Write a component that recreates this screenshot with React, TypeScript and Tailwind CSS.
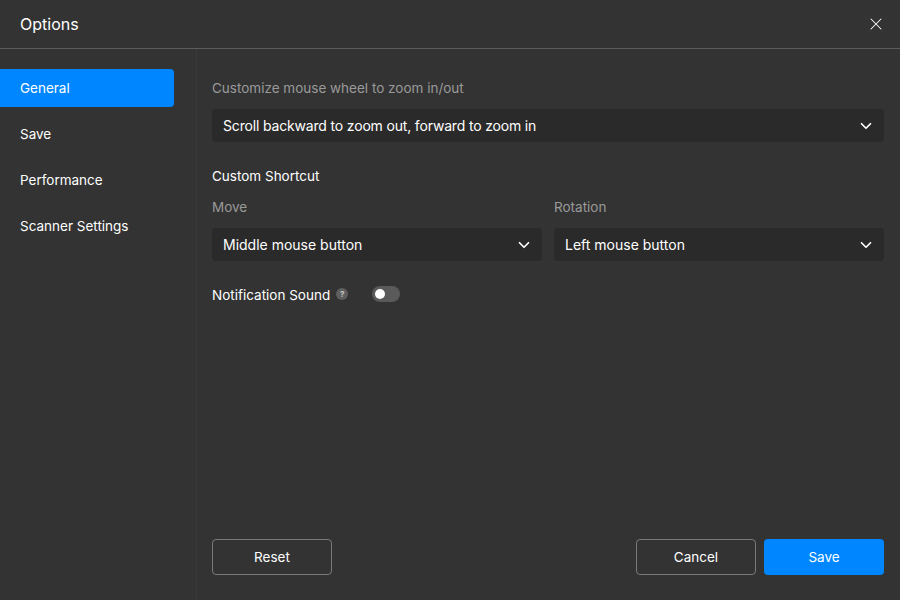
import { ChevronDown, X } from "lucide-react";

const navItems = ["General", "Save", "Performance", "Scanner Settings"];

function Select({ value, tight }: { value: string; tight?: boolean }) {
  return (
    <div className="flex h-[33px] w-full items-center justify-between rounded-[4px] bg-[#2a2a2a] pl-[11px] pr-[9px]">
      <span className={tight ? "text-[14px] leading-[20px] tracking-[-0.17px] text-white" : "text-[14px] leading-[20px] text-white"}>
        {value}
      </span>
      <ChevronDown className="h-[18px] w-[18px] text-white" strokeWidth={2.25} />
    </div>
  );
}

export default function App() {
  return (
    <div
      className="flex h-[600px] w-[900px] flex-col overflow-hidden bg-[#333333] text-white"
      style={{ fontFamily: "Inter, sans-serif" }}
    >
      <div className="flex h-[49px] shrink-0 items-center justify-between border-b border-[#5c5c5c] pl-[20px] pr-[14px]">
        <h1 className="text-[16px] font-normal leading-[22px]">Options</h1>
        <X className="h-[20px] w-[20px] text-white" strokeWidth={1.25} />
      </div>

      <div className="flex min-h-0 flex-1">
        <aside className="flex w-[197px] shrink-0 flex-col gap-[8px] border-r border-[#3a3a3a] pt-[20px]">
          {navItems.map((item, i) => (
            <div
              key={item}
              className={
                i === 0
                  ? "flex h-[38px] w-[174px] items-center rounded-r-[4px] bg-[#0087ff] pl-[20px] text-[13.5px] leading-[20px] text-white"
                  : "flex h-[38px] w-[174px] items-center pl-[20px] text-[13.5px] leading-[20px] text-white"
              }
            >
              {item}
            </div>
          ))}
        </aside>

        <main className="flex min-w-0 flex-1 flex-col pl-[15px] pr-[16px] pt-[29px] pb-[25px]">
          <p className="text-[13.5px] leading-[20px] text-[#9a9a9a]">Customize mouse wheel to zoom in/out</p>
          <div className="mt-[11px]">
            <Select value="Scroll backward to zoom out, forward to zoom in" tight />
          </div>

          <p className="mt-[24px] text-[13.5px] leading-[20px] text-white">Custom Shortcut</p>
          <div className="mt-[11px] grid grid-cols-2 gap-[12px]">
            <div>
              <p className="text-[13.5px] leading-[20px] text-[#9a9a9a]">Move</p>
              <div className="mt-[11px]">
                <Select value="Middle mouse button" />
              </div>
            </div>
            <div>
              <p className="text-[13.5px] leading-[20px] text-[#9a9a9a]">Rotation</p>
              <div className="mt-[11px]">
                <Select value="Left mouse button" />
              </div>
            </div>
          </div>

          <div className="mt-[24px] flex items-center">
            <span className="text-[13.5px] leading-[20px] text-white">Notification Sound</span>
            <span className="mb-[2px] ml-[6px] flex h-[12px] w-[12px] items-center justify-center rounded-full bg-[#5e5e5e] text-[8px] font-bold leading-none text-[#c8c8c8]">
              ?
            </span>
            <span className="mb-[2px] ml-[24px] flex h-[16px] w-[28px] items-center rounded-full bg-[#5a5a5a] pl-[3px]">
              <span className="h-[10px] w-[10px] rounded-full bg-white" />
            </span>
          </div>

          <div className="mt-auto flex items-center justify-between">
            <button className="h-[36px] w-[120px] rounded-[4px] border border-[#7a7a7a] text-[13.5px] leading-[20px] text-white">
              Reset
            </button>
            <div className="flex gap-[8px]">
              <button className="h-[36px] w-[120px] rounded-[4px] border border-[#7a7a7a] text-[13.5px] leading-[20px] text-white">
                Cancel
              </button>
              <button className="h-[36px] w-[120px] rounded-[4px] bg-[#0087ff] text-[13.5px] leading-[20px] text-white">
                Save
              </button>
            </div>
          </div>
        </main>
      </div>
    </div>
  );
}
